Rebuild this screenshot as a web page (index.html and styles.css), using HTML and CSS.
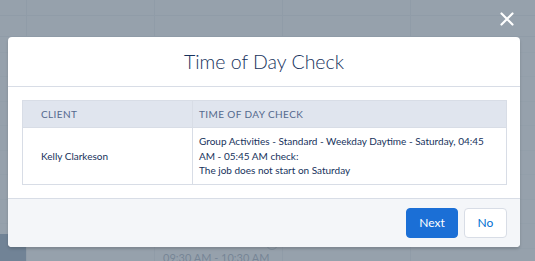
FILE: index.html
```html
<!DOCTYPE html>
<html lang="en">
<head>
  <meta charset="UTF-8" />
  <title>Time of Day Check</title>
  <link rel="stylesheet" href="styles.css">
</head>
<body>
  <div class="calendar">
    <div class="col col-time">
      <div class="now-block"></div>
    </div>
    <div class="col"></div>
    <div class="col">
      <div class="event">
        <div class="event-title">JOB 129193</div>
        <div class="event-time">09:30 AM - 10:30 AM</div>
        <span class="event-dot"></span>
      </div>
    </div>
    <div class="col"></div>
    <div class="col col-last"></div>
  </div>

  <div class="backdrop"></div>

  <button class="close-btn" title="Close">
    <svg width="14" height="14" viewBox="0 0 14 14">
      <path d="M1.5 1.5 L12.5 12.5 M12.5 1.5 L1.5 12.5" stroke="#fff" stroke-width="2.2" stroke-linecap="round" />
    </svg>
  </button>

  <div class="modal">
    <div class="modal-header">
      <h2>Time of Day Check</h2>
    </div>
    <div class="modal-body">
      <table class="check-table">
        <tr>
          <th class="col-client">Client</th>
          <th>Time of Day Check</th>
        </tr>
        <tr>
          <td class="col-client">Kelly Clarkeson</td>
          <td>Group Activities - Standard - Weekday Daytime - Saturday, 04:45 AM - 05:45 AM check:<br>The job does not start on Saturday</td>
        </tr>
      </table>
    </div>
    <div class="modal-footer">
      <button class="btn btn-brand">Next</button>
      <button class="btn btn-neutral">No</button>
    </div>
  </div>
</body>
</html>
```
FILE: styles.css
```css
body {
  margin: 0;
  width: 535px;
  height: 261px;
  overflow: hidden;
  position: relative;
  font-family: Lato, "Open Sans", Arial, sans-serif;
  background: #fff;
}

/* calendar underneath */
.calendar {
  display: flex;
  height: 261px;
  background: #f4f6f9;
}
.col {
  width: 127px;
  border-right: 1px solid #d8dde6;
  position: relative;
  background-image:
    linear-gradient(#d8dde6, #d8dde6),
    linear-gradient(#d8dde6, #d8dde6),
    repeating-linear-gradient(to bottom, transparent 0, transparent 23.5px, #e5e9ef 23.5px, #e5e9ef 24.5px);
  background-size: 100% 1px, 100% 1px, 100% 100%;
  background-position: 0 15px, 0 36px, 0 4px;
  background-repeat: no-repeat, no-repeat, repeat;
}
.col-time {
  width: 26px;
}
.col-last {
  flex: 1;
  border-right: none;
}
.now-block {
  position: absolute;
  left: 0;
  right: 0;
  top: 234px;
  bottom: 0;
  background: #3d628e;
}
.event {
  position: absolute;
  left: 8px;
  right: 0;
  top: 236px;
  color: #54698d;
  font-size: 11px;
}
.event-title {
  letter-spacing: 1px;
  line-height: 14px;
}
.event-time {
  line-height: 14px;
  margin-top: 1px;
}
.event-dot {
  position: absolute;
  right: 4px;
  top: 2px;
  width: 10px;
  height: 10px;
  border: 1px solid #8c9bb0;
  border-radius: 50%;
}

.backdrop {
  position: absolute;
  inset: 0;
  background: rgba(126, 140, 153, 0.8);
}

.close-btn {
  position: absolute;
  left: 500px;
  top: 12px;
  width: 14px;
  height: 14px;
  padding: 0;
  border: none;
  background: none;
  display: flex;
}

/* modal */
.modal {
  position: absolute;
  left: 8px;
  top: 37px;
  width: 512px;
  background: #fff;
  border-radius: 4px;
  box-shadow: 0 2px 3px rgba(0, 0, 0, 0.16);
  overflow: hidden;
}
.modal-header {
  height: 49px;
  border-bottom: 1px solid #d8dde6;
  display: flex;
  align-items: center;
  justify-content: center;
}
.modal-header h2 {
  margin: 0;
  font-size: 19.5px;
  font-weight: 300;
  color: #16325c;
}
.modal-body {
  padding: 13px 13px 13px 14px;
}
.check-table {
  width: 100%;
  border-collapse: collapse;
  border: 1px solid #d8dde6;
  font-size: 10px;
}
.check-table th {
  background: #e0e5ee;
  color: #54698d;
  font-weight: 400;
  text-transform: uppercase;
  letter-spacing: 0.4px;
  text-align: left;
  height: 26px;
  padding: 0 6px;
  border-bottom: 1px solid #d8dde6;
}
.check-table td {
  color: #16325c;
  padding: 6px;
  line-height: 14.5px;
  border-left: 1px solid #d8dde6;
}
.check-table th.col-client,
.check-table td.col-client {
  width: 145px;
  padding-left: 18px;
  border-left: none;
}
.check-table th + th {
  border-left: 1px solid #d8dde6;
}

.modal-footer {
  height: 48px;
  background: #f4f6f9;
  border-top: 1px solid #d8dde6;
  display: flex;
  align-items: center;
  justify-content: flex-end;
  gap: 6px;
  padding-right: 13px;
}
.btn {
  height: 30px;
  border-radius: 4px;
  font-family: Lato, "Open Sans", Arial, sans-serif;
  font-size: 12px;
  padding: 0;
  border: 1px solid #d8dde6;
}
.btn-brand {
  background: #1b6fd6;
  border-color: #1b6fd6;
  color: #fff;
  width: 52px;
}
.btn-neutral {
  background: #fff;
  color: #0070d2;
  width: 43px;
}
```
